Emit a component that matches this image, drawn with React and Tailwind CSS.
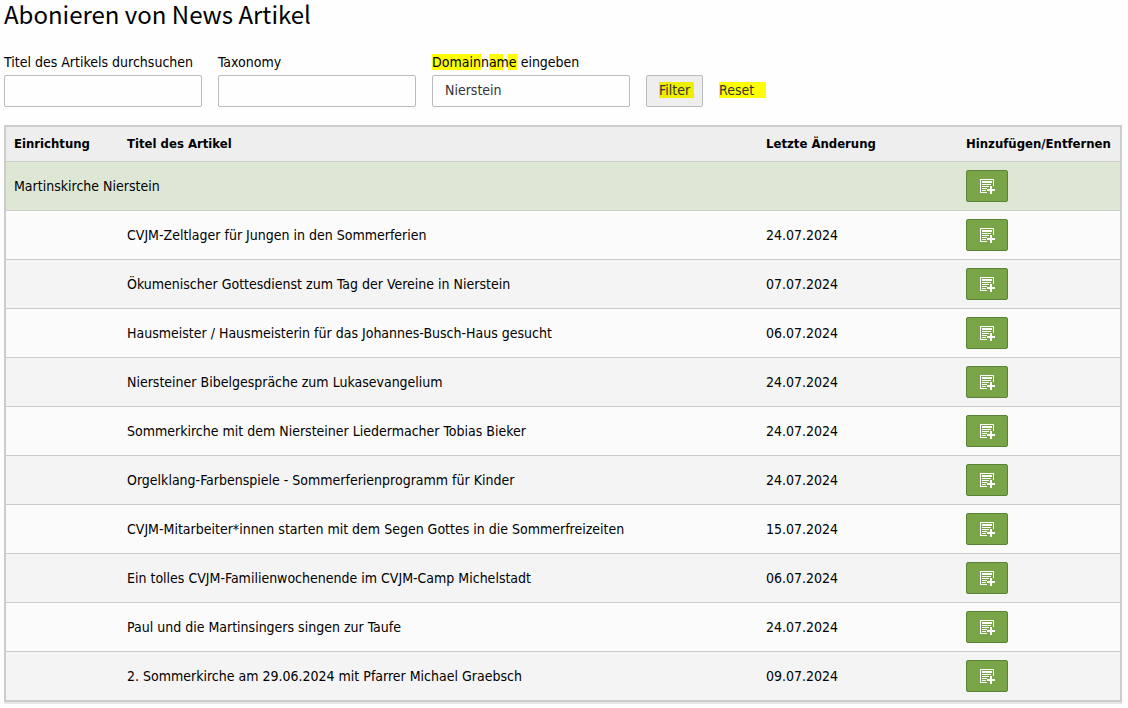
import React, { useState } from "react";

const institution = "Martinskirche Nierstein";

const articles = [
  { title: "CVJM-Zeltlager für Jungen in den Sommerferien", changed: "24.07.2024" },
  { title: "Ökumenischer Gottesdienst zum Tag der Vereine in Nierstein", changed: "07.07.2024" },
  { title: "Hausmeister / Hausmeisterin für das Johannes-Busch-Haus gesucht", changed: "06.07.2024" },
  { title: "Niersteiner Bibelgespräche zum Lukasevangelium", changed: "24.07.2024" },
  { title: "Sommerkirche mit dem Niersteiner Liedermacher Tobias Bieker", changed: "24.07.2024" },
  { title: "Orgelklang-Farbenspiele - Sommerferienprogramm für Kinder", changed: "24.07.2024" },
  { title: "CVJM-Mitarbeiter*innen starten mit dem Segen Gottes in die Sommerfreizeiten", changed: "15.07.2024" },
  { title: "Ein tolles CVJM-Familienwochenende im CVJM-Camp Michelstadt", changed: "06.07.2024" },
  { title: "Paul und die Martinsingers singen zur Taufe", changed: "24.07.2024" },
  { title: "2. Sommerkirche am 29.06.2024 mit Pfarrer Michael Graebsch", changed: "09.07.2024" },
];

function AddIcon() {
  return (
    <svg width="16" height="16" viewBox="0 0 16 16" shapeRendering="crispEdges" aria-hidden="true">
      <path
        fill="#fff"
        d="M1 1h14v7h-1V2H2v12h6v1H1zM3 3h10v2H3zM3 6h9v1H3zM3 8h7v1H3zM3 10h5v1H3zM3 12h4v1H3z"
      />
      <path fill="#fff" d="M11 8h2v3h3v2h-3v3h-2v-3H8v-2h3z" />
    </svg>
  );
}

function AddButton({ label }) {
  return (
    <button
      type="button"
      aria-label={label}
      className="flex h-8 w-[42px] items-center justify-center rounded-xs border border-[#5b8335] bg-[#79a548] hover:bg-[#6c9540]"
    >
      <AddIcon />
    </button>
  );
}

function FilterField({ id, label, value, onChange }) {
  return (
    <div className="flex flex-col">
      <label htmlFor={id} className="mb-[3px] leading-5">
        {label}
      </label>
      <input
        id={id}
        type="text"
        value={value}
        onChange={(e) => onChange(e.target.value)}
        className="h-8 w-[198px] rounded-xs border border-[#bbb] bg-[#fefefe] px-3 pb-[2px] text-[#333] outline-none focus:border-[#79a548]"
      />
    </div>
  );
}

export default function App() {
  const [title, setTitle] = useState("");
  const [taxonomy, setTaxonomy] = useState("");
  const [domain, setDomain] = useState("Nierstein");

  function handleReset(e) {
    e.preventDefault();
    setTitle("");
    setTaxonomy("");
    setDomain("");
  }

  return (
    <div className="bg-[#fefefe] pr-[6px] pl-1 pb-1 font-['DejaVu_Sans_Condensed','DejaVu_Sans',sans-serif] text-[14px] leading-4 text-black">
      <h1 className="font-['Noto_Sans_CJK_SC',sans-serif] text-2xl leading-7">
        Abonieren von News Artikel
      </h1>

      <form
        onSubmit={(e) => e.preventDefault()}
        className="mt-6 flex flex-wrap items-end gap-4"
      >
        <FilterField
          id="title"
          label="Titel des Artikels durchsuchen"
          value={title}
          onChange={setTitle}
        />
        <FilterField id="taxonomy" label="Taxonomy" value={taxonomy} onChange={setTaxonomy} />
        <FilterField
          id="domain"
          label={
            <>
              <span className="bg-[#ff0]">Domain</span>n
              <span className="bg-[linear-gradient(90deg,#ff0_14px,transparent_14px,transparent_19px,#ff0_19px)]">
                ame
              </span>{" "}
              eingeben
            </>
          }
          value={domain}
          onChange={setDomain}
        />
        <button
          type="submit"
          className="h-8 rounded-xs border border-[#bbb] bg-[#eee] pr-2 pb-[2px] pl-3 text-[#333]"
        >
          <span className="block bg-[#eeee00] pr-1">Filter</span>
        </button>
        <a href="#reset" onClick={handleReset} className="flex h-8 items-center pb-[2px] text-[#333]">
          <span className="bg-[#ff0] pr-3">Reset</span>
        </a>
      </form>

      <table className="mt-[18px] w-full border-separate border-spacing-0 border-2 border-[#ccc] text-left shadow-[0_2px_0_#e6e6e6]">
        <thead className="bg-[#eee] text-[13px]">
          <tr className="h-[35px]">
            <th className="w-[113px] border-b border-[#ccc] px-2">Einrichtung</th>
            <th className="border-b border-[#ccc] px-2">Titel des Artikel</th>
            <th className="w-[200px] border-b border-[#ccc] px-2">Letzte Änderung</th>
            <th className="w-[162px] border-b border-[#ccc] px-2">Hinzufügen/Entfernen</th>
          </tr>
        </thead>
        <tbody>
          <tr className="bg-[#dde7d4]">
            <td colSpan={3} className="border-b border-[#ccc] p-2">
              {institution}
            </td>
            <td className="border-b border-[#ccc] p-2">
              <AddButton label={institution} />
            </td>
          </tr>
          {articles.map((a) => (
            <tr
              key={a.title}
              className="even:bg-[#fbfbfb] odd:bg-[#f4f4f4] *:border-b *:border-[#ccc] last:*:border-b-0"
            >
              <td className="p-2"></td>
              <td className="p-2">{a.title}</td>
              <td className="p-2">{a.changed}</td>
              <td className="p-2">
                <AddButton label={a.title} />
              </td>
            </tr>
          ))}
        </tbody>
      </table>
    </div>
  );
}
